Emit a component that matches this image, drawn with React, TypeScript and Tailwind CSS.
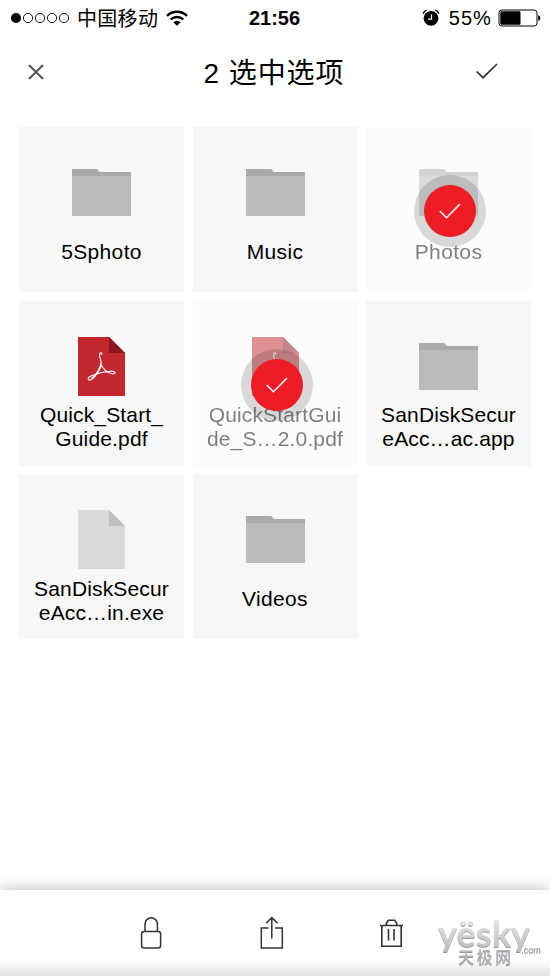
import clsx from 'clsx'

type FileKind = 'folder' | 'pdf' | 'file'

interface FileItem {
  id: number
  kind: FileKind
  lines: string[]
  selected?: boolean
}

const files: FileItem[] = [
  { id: 1, kind: 'folder', lines: ['5Sphoto'] },
  { id: 2, kind: 'folder', lines: ['Music'] },
  { id: 3, kind: 'folder', lines: ['Photos'], selected: true },
  { id: 4, kind: 'pdf', lines: ['Quick_Start_', 'Guide.pdf'] },
  { id: 5, kind: 'pdf', lines: ['QuickStartGui', 'de_S…2.0.pdf'], selected: true },
  { id: 6, kind: 'folder', lines: ['SanDiskSecur', 'eAcc…ac.app'] },
  { id: 7, kind: 'file', lines: ['SanDiskSecur', 'eAcc…in.exe'] },
  { id: 8, kind: 'folder', lines: ['Videos'] },
]

function FolderIcon() {
  return (
    <svg width="59" height="47" viewBox="0 0 59 47">
      <path d="M0 0h25l2.5 3H58a1 1 0 0 1 1 1v43H0z" fill="#bbb" />
      <path d="M0 0h25l2.5 3H58a1 1 0 0 1 1 1v3H0z" fill="#aaa" />
    </svg>
  )
}

function PageIcon({ pdf }: { pdf?: boolean }) {
  return (
    <svg width="47" height="59" viewBox="0 0 47 59">
      <path d="M0 0h31l16 16v43H0z" fill={pdf ? '#c1272d' : '#dadada'} />
      <path d="M31 0l16 16H31z" fill={pdf ? '#8a1420' : '#bfbfbf'} />
      {pdf && (
        <g fill="none" stroke="#fff" strokeLinecap="round" strokeLinejoin="round">
          <path d="M23.7 17.5C24 15 21.6 15.2 21.6 18C21.6 21.5 24 24 23 28C21.8 33 17.5 40 13.5 42.5C10 44.5 9 41 12 39.5C18 36.5 25 35 32 34.2C38 33.6 38.5 37 34.5 36.8C29.5 36.5 23.8 30.5 22.8 27" strokeWidth="1.1" />
          <path d="M23 27C21.5 33 17.5 38.5 14 41.5" strokeWidth="1.5" />
        </g>
      )}
    </svg>
  )
}

function SelectedBadge() {
  return (
    <div className="absolute left-12 top-12 flex size-[72px] items-center justify-center rounded-full bg-black/[0.14]">
      <div className="flex size-[52px] items-center justify-center rounded-full bg-[#ee1c25]">
        <svg width="22" height="16" viewBox="0 0 22 16" fill="none" stroke="#fff" strokeWidth="1.6">
          <path d="M.8 8l6.7 6.7L21 1" />
        </svg>
      </div>
    </div>
  )
}

function FileTile({ item }: { item: FileItem }) {
  const twoLines = item.lines.length > 1
  return (
    <div className={clsx('relative h-[165px]', item.selected ? 'bg-[#fcfcfc]' : 'bg-[#f7f7f7]')}>
      <div className={clsx('flex h-full flex-col items-center', item.selected && 'opacity-50')}>
        <div className={clsx('flex h-[66px] shrink-0', item.kind === 'folder' ? 'pt-[42px]' : 'pt-9')}>
          {item.kind === 'folder' ? <FolderIcon /> : <PageIcon pdf={item.kind === 'pdf'} />}
        </div>
        <div
          className={clsx(
            'text-center text-[21px] leading-6 whitespace-nowrap text-black',
            twoLines ? 'pt-[36.4px] tracking-[0.15px]' : 'pt-[47px] tracking-[0.35px]',
          )}
        >
          {item.lines.map((line) => (
            <div key={line}>{line}</div>
          ))}
        </div>
      </div>
      {item.selected && <SelectedBadge />}
    </div>
  )
}

function StatusBar() {
  return (
    <div className="flex h-[35px] items-center justify-between pr-[9px] pl-[11px]">
      <div className="flex w-[200px] items-center">
        <svg width="59" height="12" viewBox="0 0 59 12" fill="none" stroke="#000" strokeWidth="0.9">
          <circle cx="5" cy="6" r="5" fill="#000" stroke="none" />
          <circle cx="17" cy="6" r="4.6" />
          <circle cx="29" cy="6" r="4.6" />
          <circle cx="41" cy="6" r="4.6" />
          <circle cx="53" cy="6" r="4.6" />
        </svg>
        <span className="ml-[7px] pt-0.5 text-[20px] leading-6 tracking-[0.3px]">中国移动</span>
        <svg className="ml-2" width="22" height="16" viewBox="0 0 22 16" fill="none" stroke="#000" strokeWidth="2.4">
          <path d="M1 5.8a14.2 14.2 0 0 1 20 0" />
          <path d="M4.7 9.5a9 9 0 0 1 12.6 0" />
          <path d="M7.3 12.2a5.3 5.3 0 0 1 7.4 0L11 15.8z" fill="#000" stroke="none" />
        </svg>
      </div>
      <span className="pt-px pr-[3px] text-[20px] leading-6 font-bold">21:56</span>
      <div className="flex w-[200px] items-center justify-end">
        <svg width="18" height="18" viewBox="0 0 18 18">
          <circle cx="9" cy="9.3" r="7.4" />
          <path d="M9.5 5.5v4.7H6" fill="none" stroke="#fff" strokeWidth="1.3" />
          <path d="M1 4.6A8 8 0 0 1 4.6 1M17 4.6A8 8 0 0 0 13.4 1" fill="none" stroke="#000" strokeWidth="1.3" />
        </svg>
        <span className="ml-[9px] pt-px text-[20px] leading-6 tracking-[1.1px]">55%</span>
        <svg className="ml-1.5" width="43" height="18" viewBox="0 0 43 18">
          <rect x="1" y="1" width="38" height="16" rx="2.8" fill="none" stroke="#000" strokeWidth="1" />
          <rect x="2.3" y="2.3" width="20.2" height="13.4" rx="1.2" />
          <path d="M40.2 6.2c2.8.6 2.8 5 0 5.6z" />
        </svg>
      </div>
    </div>
  )
}

function Header() {
  return (
    <header className="flex h-[92px] items-start justify-between pr-[52px] pl-7">
      <svg className="mt-[29px]" width="16" height="16" viewBox="0 0 16 16" fill="none" stroke="#555" strokeWidth="2">
        <path d="M1 1l14 14M15 1L1 15" />
      </svg>
      <h1 className="mt-[19px] ml-[28px] text-[28px] leading-10 tracking-[0.9px]">2 选中选项</h1>
      <svg className="mt-7" width="22" height="16" viewBox="0 0 22 16" fill="none" stroke="#333" strokeWidth="1.7">
        <path d="M.7 8.5l6.3 6.2L21 1" />
      </svg>
    </header>
  )
}

function Watermark() {
  return (
    <div className="absolute top-[33px] left-[438px] w-[112px] [filter:drop-shadow(0_1px_0.4px_#999)]">
      <div className="flex h-[29px] items-end">
        <span className="bg-gradient-to-b from-[#e6e7e9] to-[#b9bcc1] bg-clip-text pb-1 font-['Lato'] text-[36px] leading-[29px] font-bold tracking-[0.1px] text-transparent">
          yësky
        </span>
        <span className="-mb-[3px] -ml-[9px] text-[9px] leading-[10px] text-[#aaa]">.com</span>
      </div>
      <div className="pl-5 text-[16px] leading-[12px] font-medium tracking-[2.6px] text-[#b2b5ba]">天极网</div>
    </div>
  )
}

function Toolbar() {
  return (
    <footer className="relative h-[86px] bg-gradient-to-b from-white from-80% to-[#e2e2e2] shadow-[0_-2px_13px_rgba(0,0,0,0.22)]">
      <div className="flex pt-[26px] pl-[140px]">
        <svg width="22" height="34" viewBox="0 0 22 34" fill="none" stroke="#333" strokeWidth="1.5">
          <rect x="1.6" y="15.5" width="19" height="16.5" rx="2.5" />
          <path d="M5 15.5V8a6.2 6.2 0 0 1 12.4 0v7.5" />
        </svg>
        <svg className="ml-[98px]" width="24" height="34" viewBox="0 0 24 34" fill="none" stroke="#333" strokeWidth="1.5">
          <path d="M8.5 12H1.3v20h21V12h-7.2" />
          <path d="M11.8 22.5V2M6 7.3l5.8-5.7 5.8 5.7" />
        </svg>
        <svg className="ml-[95px]" width="25" height="34" viewBox="0 0 25 34" fill="none" stroke="#333" strokeWidth="1.6">
          <path d="M1 9.5h23M2.8 9.5v20.8h19.4v-20.8M7.3 9.5V7.3l2-3h6.4l2 3v2.2M9.5 13v11.5M15 13v11.5" />
        </svg>
      </div>
      <Watermark />
    </footer>
  )
}

export default function App() {
  return (
    <div className="flex h-[976px] w-[550px] flex-col overflow-hidden bg-white font-['Liberation_Sans','Noto_Sans_CJK_SC',sans-serif] text-black">
      <StatusBar />
      <Header />
      <main className="grid flex-1 grid-cols-3 content-start gap-x-[8.5px] gap-y-[8.7px] px-[19px]">
        {files.map((item) => (
          <FileTile key={item.id} item={item} />
        ))}
      </main>
      <Toolbar />
    </div>
  )
}
